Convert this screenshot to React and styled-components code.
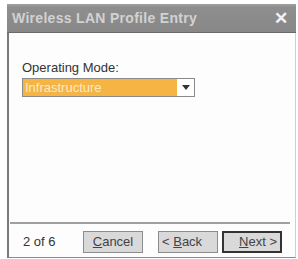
import styled, { createGlobalStyle } from "styled-components"

const Global = createGlobalStyle`
html, body {
  margin: 0;
  background: #ffffff;
}
body {
  font-family: "Liberation Sans", Arial, sans-serif;
}
`

const Window = styled.div`
margin: 4px 0 0 7px;
width: 289px;
height: 254px;
display: flex;
flex-direction: column;
box-sizing: border-box;
`

const TitleBar = styled.div`
height: 29px;
display: flex;
align-items: center;
justify-content: space-between;
padding: 0 8px 0 5px;
background: linear-gradient(#a2a2a2 0px, #8e8e8e 3px, #888888 100%);
border-bottom: 1px solid #6a6a6a;
box-sizing: border-box;
`

const Title = styled.span`
color: #d2d2d2;
font-size: 14px;
font-weight: bold;
letter-spacing: 0.3px;
`

const Close = styled.span`
color: #f2f2f2;
font-size: 17px;
font-weight: bold;
line-height: 1;
`

const Body = styled.div`
flex: 1;
display: flex;
flex-direction: column;
border-left: 2px solid #7a7a7a;
border-right: 1px solid #d0d0d0;
border-bottom: 1px solid #8a8a8a;
background: #fdfdfd;
`

const Content = styled.div`
flex: 1;
padding: 27px 0 0 13px;
`

const Label = styled.div`
font-size: 13px;
color: #333;
margin-bottom: 3px;
`

const Select = styled.div`
width: 173px;
height: 19px;
display: flex;
border: 1px solid #8a8a8a;
box-sizing: border-box;
background: #f5b443;
`

const SelectText = styled.div`
flex: 1;
color: #fbe9c6;
font-size: 13px;
line-height: 17px;
padding-left: 2px;
`

const Arrow = styled.div`
width: 17px;
background: #ffffff;
display: flex;
align-items: center;
justify-content: center;
&::after {
  content: "";
  border-left: 4px solid transparent;
  border-right: 4px solid transparent;
  border-top: 5px solid #333;
}
`

const Footer = styled.div`
margin: 0 5px 0 1px;
border-top: 2px solid #a0a0a0;
height: 35px;
display: flex;
align-items: flex-start;
padding: 7px 0 0 13px;
box-sizing: border-box;
`

const Pages = styled.span`
font-size: 13px;
color: #333;
width: 60px;
line-height: 22px;
`

const Button = styled.div`
width: 60px;
height: 22px;
box-sizing: border-box;
border: ${p => (p.$primary ? "2px solid #333" : "1px solid #8c8c8c")};
background: #d9d9d9;
text-align: ${p => p.$align || "center"};
padding: ${p => p.$pad || "0"};
font-size: 13px;
line-height: ${p => (p.$primary ? "18px" : "20px")};
color: #444;
margin-right: ${p => p.$gap || "0"};
white-space: pre;
u {
  text-decoration: underline;
}
`

export default function App() {
  return (
    <>
      <Global />
      <Window>
        <TitleBar>
          <Title>Wireless LAN Profile Entry</Title>
          <Close>✕</Close>
        </TitleBar>
        <Body>
          <Content>
            <Label>Operating Mode:</Label>
            <Select>
              <SelectText>Infrastructure</SelectText>
              <Arrow />
            </Select>
          </Content>
          <Footer>
            <Pages>2 of 6</Pages>
            <Button $gap="15px"><u>C</u>ancel</Button>
            <Button $gap="4px" $align="left" $pad="0 0 0 3px">{"< "}<u>B</u>ack</Button>
            <Button $primary $align="right" $pad="0 3px 0 0"><u>N</u>ext {">"}</Button>
          </Footer>
        </Body>
      </Window>
    </>
  )
}
